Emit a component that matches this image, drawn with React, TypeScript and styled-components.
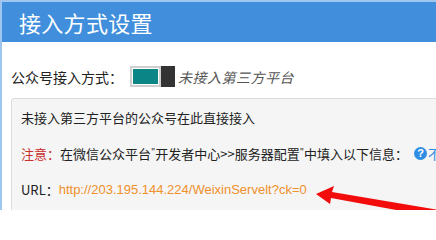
import styled, { createGlobalStyle } from "styled-components";

const GlobalStyle = createGlobalStyle`
  html, body {
    margin: 0;
    padding: 0;
    background: #ffffff;
    overflow: hidden;
  }
  body {
    font-family: "Noto Sans CJK SC", "Liberation Sans", sans-serif;
    color: #333333;
  }
`;

const App = () => {
  return (
    <>
      <GlobalStyle />
      <Panel>
        <Header>
          <Title>接入方式设置</Title>
        </Header>
        <Body>
          <ModeRow>
            <Label>公众号接入方式：</Label>
            <Toggle>
              <ToggleTrack />
              <ToggleKnob />
            </Toggle>
            <ModeState>未接入第三方平台</ModeState>
          </ModeRow>
          <InfoBox>
            <InfoLine>未接入第三方平台的公众号在此直接接入</InfoLine>
            <InfoLine>
              <Notice>注意：</Notice>
              在微信公众平台<Quote>"</Quote>开发者中心&gt;&gt;服务器配置<Quote>"</Quote>中填入以下信息：
              <HelpLink>
                <HelpIcon>?</HelpIcon>不会配置？
              </HelpLink>
            </InfoLine>
            <InfoLine>
              URL：<UrlText>http://203.195.144.224/WeixinServelt?ck=0</UrlText>
            </InfoLine>
          </InfoBox>
        </Body>
        {/* 标注箭头 */}
        <Arrow width="140" height="40" viewBox="0 0 140 40">
          <polygon points="0,13 18,5 16,11 140,32 140,40 15,17 14,23" fill="#f20c0c" />
        </Arrow>
      </Panel>
    </>
  );
};

const Panel = styled.div`
  position: relative;
  width: 640px;
  height: 210px;
  border-left: 2px solid #9fc6ee;
  border-top: 2px solid #9fc6ee;
  box-sizing: border-box;
`;

const Header = styled.div`
  height: 40px;
  background: #418fdc;
  display: flex;
  align-items: center;
  padding-left: 17px;
`;

const Title = styled.h1`
  margin: 0;
  font-size: 22px;
  font-weight: 400;
  color: #ffffff;
  letter-spacing: 0.3px;
`;

const Body = styled.div`
  padding: 24px 0 0 9px;
`;

const ModeRow = styled.div`
  display: flex;
  align-items: center;
  height: 21px;
`;

const Label = styled.span`
  font-size: 14px;
  color: #222222;
  width: 119px;
`;

const Toggle = styled.div`
  display: flex;
  width: 45px;
  height: 21px;
  box-sizing: border-box;
`;

const ToggleTrack = styled.div`
  flex: 1;
  border: 2px solid #cfcfcf;
  box-sizing: border-box;
  background: #0b8585;
  box-shadow: inset 0 0 0 1px #ffffff;
  height: 21px;
`;

const ToggleKnob = styled.div`
  width: 14px;
  height: 21px;
  background: #333333;
`;

const ModeState = styled.span`
  margin-left: 3px;
  font-size: 14px;
  font-style: italic;
  color: #555555;
  letter-spacing: 0.5px;
`;

const InfoBox = styled.div`
  margin-top: 11px;
  width: 600px;
  border: 1px solid #dcdcdc;
  border-radius: 3px;
  background: #f5f5f5;
  padding: 0 0 0 9px;
  box-sizing: border-box;
  height: 140px;
`;

const InfoLine = styled.div`
  display: flex;
  align-items: center;
  height: 36px;
  font-size: 13px;
  color: #222222;
  white-space: nowrap;
`;

const Notice = styled.span`
  color: #c9302c;
`;

const Quote = styled.span`
  font-size: 9px;
  align-self: flex-start;
  margin-top: 10px;
`;

const HelpLink = styled.span`
  display: inline-flex;
  align-items: center;
  margin-left: 6px;
  color: #2f8de4;
`;

const HelpIcon = styled.span`
  display: inline-flex;
  align-items: center;
  justify-content: center;
  width: 13px;
  height: 13px;
  border-radius: 50%;
  background: #2f8de4;
  color: #ffffff;
  font-family: "Liberation Sans", sans-serif;
  font-weight: 700;
  font-size: 11px;
  margin-right: 1px;
`;

const UrlText = styled.span`
  color: #f0902a;
  font-family: "Liberation Sans", sans-serif;
  font-size: 13px;
`;

const Arrow = styled.svg`
  position: absolute;
  left: 314px;
  top: 179px;
`;

export default App;
